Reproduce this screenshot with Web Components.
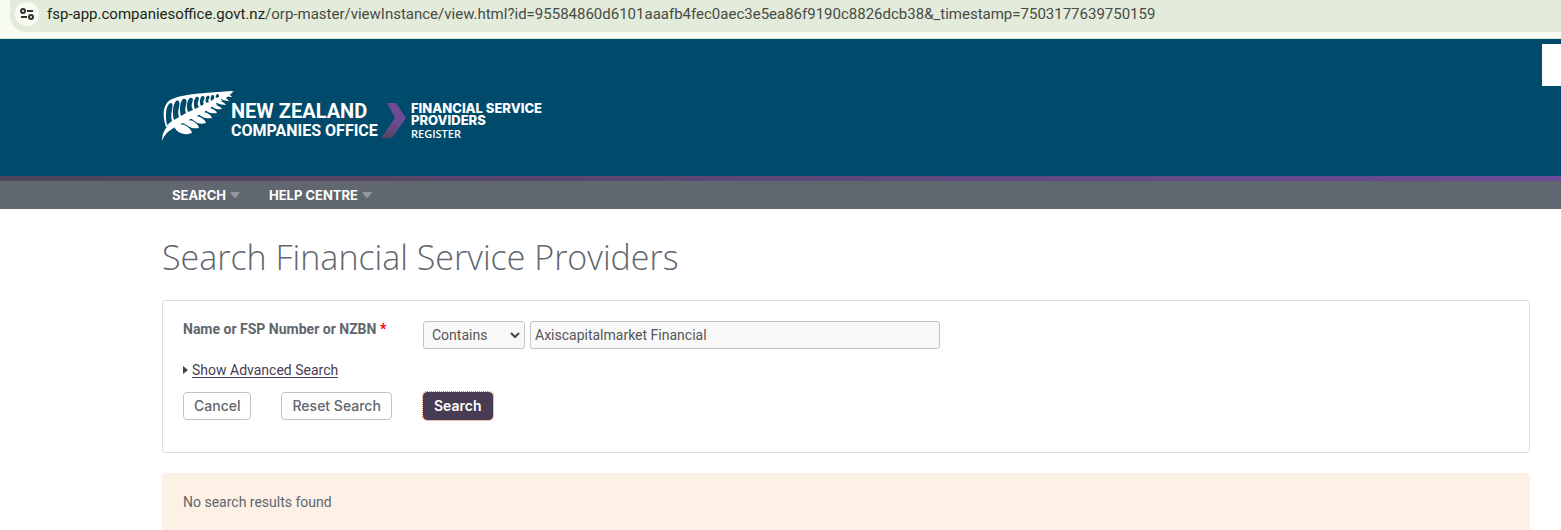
<!DOCTYPE html>
<html lang="en">
<head>
<meta charset="utf-8">
<title>Search Financial Service Providers</title>
<style>
    body {
        margin: 0;
        background: #fff;
        color: #5f666e;
        font: 14px/20px Roboto, sans-serif;
    }
</style>
</head>
<body>

<address-bar host="fsp-app.companiesoffice.govt.nz" path="/orp-master/viewInstance/view.html?id=95584860d6101aaafb4fec0aec3e5ea86f9190c8826dcb38&amp;_timestamp=7503177639750159"></address-bar>

<site-header>
    <span slot="register">Financial Service<br>Providers</span>
</site-header>

<nav-bar>
    <nav-item>Search</nav-item>
    <nav-item>Help Centre</nav-item>
</nav-bar>

<page-content>
    <span slot="title">Search Financial Service Providers</span>
    <search-form></search-form>
    <notice-box>No search results found</notice-box>
</page-content>

<script>
///////////////////////
//// Address bar /////
//////////////////////

class AddressBar extends HTMLElement {

    constructor() {
        super();

        this.attachShadow({ mode: 'open' });
        this.shadowRoot.innerHTML = `
            <style>
                :host {
                    display: block;
                    padding: 0 0 6px 10px;
                    background: #f9fcf2;
                    border-bottom: 1px solid #dce6d5;
                }

                .pill {
                    display: flex;
                    align-items: center;
                    gap: 8px;
                    height: 32px;
                    box-sizing: border-box;
                    padding: 0 5px 4px;
                    background: #e3ecda;
                    border-radius: 0 0 0 16px;
                    font: 15px/22px Roboto, sans-serif;
                    color: #474b45;
                    white-space: nowrap;
                }

                button {
                    display: flex;
                    flex: none;
                    padding: 0;
                    border: 0;
                    border-radius: 50%;
                    background: #f9fcf2;
                }

                .host { color: #1c1f1b; }
            </style>

            <div class="pill">
                <button type="button" aria-label="Site information">
                    <svg width="24" height="24" viewBox="0 0 24 24" fill="none" stroke="#30332f" stroke-width="2">
                        <circle cx="8" cy="9" r="2"/>
                        <path d="M12 9h6M6 15h6"/>
                        <circle cx="16" cy="15" r="2"/>
                    </svg>
                </button>
                <div><span class="host"></span><span class="path"></span></div>
            </div>
        `;

        this.shadowRoot.querySelector('.host').textContent = this.getAttribute('host');
        this.shadowRoot.querySelector('.path').textContent = this.getAttribute('path');
    }
}

window.customElements.define('address-bar', AddressBar);

///////////////////////
////// Fern logo //////
//////////////////////

class FernLogo extends HTMLElement {

    constructor() {
        super();

        this.attachShadow({ mode: 'open' });
        this.shadowRoot.innerHTML = `
            <style>
                :host { display: block; }
                svg { display: block; }
            </style>

            <svg width="72" height="52" viewBox="0 0 72 52" fill="#fff" aria-hidden="true">
                <!-- stem -->
                <path d="M0 51C0 43 3 38 9 33C26 25 48 14 62 4L72 1C64 9 50 18 39 24C27 30 16 35 10 39C4 43 2 46 0 51Z"/>
                <!-- upper fronds, cut by arched gaps -->
                <path fill-rule="evenodd" d="M4 37C0 25 1 15 8 10C20 4 40 3 71 1L60 8L9 34Z"/>
                <path fill="#004b6b" d="M5 35C3 26 4 17 7 14C11 11 11 16 10 20C9 24 9 28 10 31Z
                    M12 30C10 23 11 14 14 11C18 9 18 14 17 17C16 22 16 24 17 27Z
                    M19 26C17 20 18 12 21 9C25 8 25 12 24 15C23 19 23 21 24 23Z
                    M26 22C24 17 25 10 28 8C32 7 31 11 30 13C29 16 30 18 31 20Z
                    M33 19C31 15 32 9 34 7C38 6 37 10 36 12C35 14 36 15 37 17Z
                    M39 16C37 12 38 8 40 6C43 6 43 8 42 10C41 12 41 13 42 14Z
                    M44 13C43 10 44 7 45 6C48 5 48 8 47 9C46 10 46 11 47 12Z
                    M49 11C48 8 49 6 50 5C53 5 52 7 52 9Z
                    M54 8C53 7 54 5 55 4C57 4 57 5 57 7Z"/>
                <!-- lower fronds -->
                <path d="M12 35C19 32 29 37 30 43C23 46 13 43 12 35ZM20 31C27 28 36 32 37 38C30 39 22 37 20 31ZM28 27C35 24 43 28 44 33C37 35 30 32 28 27ZM36 23C42 20 49 24 50 28C44 29 38 27 36 23ZM43 19C48 17 54 20 55 23C50 24 45 23 43 19ZM49 15C53 14 58 16 60 19C55 20 51 19 49 15ZM54 11C58 10 62 12 64 15C60 15 56 14 54 11ZM59 7C62 7 66 9 67 11C63 11 60 10 59 7ZM63 4C66 4 69 5 70 7C67 7 65 7 63 4Z"/>
                <!-- gaps between the lower fronds -->
                <path d="M22 34L32 40M29 29L39 36M36 25L45 31M43 21L51 26M49 17L56 21M54 13L61 17M59 9L65 13" fill="none" stroke="#004b6b" stroke-width="1"/>
            </svg>
        `;
    }
}

window.customElements.define('fern-logo', FernLogo);

///////////////////////
///// Site header /////
//////////////////////

class SiteHeader extends HTMLElement {

    constructor() {
        super();

        this.attachShadow({ mode: 'open' });
        this.shadowRoot.innerHTML = `
            <style>
                :host {
                    display: block;
                    position: relative;
                    background: #004b6b;
                    color: #fff;
                }

                header {
                    display: flex;
                    align-items: flex-start;
                    padding: 51px 31px 34px 162px;
                }

                .brand {
                    display: flex;
                    color: inherit;
                    text-decoration: none;
                }

                .office {
                    padding-top: 11px;
                    width: 150px;
                    margin-left: -3px;
                    font: 700 20px/20px Roboto, sans-serif;
                    white-space: nowrap;
                }

                .office span { display: block; }
                .office .small { font-size: 16px; }

                .chevron { margin-top: 13px; }

                .register {
                    padding: 12px 0 0 5px;
                    font: 800 13px/12px Inter, sans-serif;
                    text-transform: uppercase;
                }

                .register small {
                    display: block;
                    font: 600 11px/15px "Open Sans", sans-serif;
                }

                .tab {
                    position: absolute;
                    top: 5px;
                    right: 0;
                    width: 19px;
                    height: 42px;
                    background: #fff;
                }
            </style>

            <header>
                <a class="brand" href="#">
                    <fern-logo></fern-logo>
                    <div class="office">
                        <span>NEW ZEALAND</span>
                        <span class="small">COMPANIES OFFICE</span>
                    </div>
                    <svg class="chevron" width="25" height="35" viewBox="0 0 25 35" aria-hidden="true">
                        <defs>
                            <linearGradient id="fade" x1="0" y1="0" x2="0" y2="1">
                                <stop offset=".5" stop-color="#6e4a97"/>
                                <stop offset="1" stop-color="#524760"/>
                            </linearGradient>
                        </defs>
                        <path fill="url(#fade)" d="M6 0H15L25 15L11 35H0L14 15Z"/>
                    </svg>
                    <div class="register"><slot name="register"></slot><small>Register</small></div>
                </a>
            </header>
            <div class="tab"></div>
        `;
    }
}

window.customElements.define('site-header', SiteHeader);

///////////////////////
///// Navigation //////
//////////////////////

class NavBar extends HTMLElement {

    constructor() {
        super();

        this.attachShadow({ mode: 'open' });
        this.shadowRoot.innerHTML = `
            <style>
                :host {
                    display: block;
                    background: #60676e;
                }

                .stripe {
                    height: 5px;
                    background: linear-gradient(90deg, #4f4458, #6b4c97);
                }

                nav {
                    display: flex;
                    gap: 29px;
                    padding: 0 31px 0 172px;
                }
            </style>

            <div class="stripe"></div>
            <nav><slot></slot></nav>
        `;
    }
}

window.customElements.define('nav-bar', NavBar);

class NavItem extends HTMLElement {

    constructor() {
        super();

        this.attachShadow({ mode: 'open' });
        this.shadowRoot.innerHTML = `
            <style>
                :host { display: block; }

                a {
                    display: flex;
                    align-items: center;
                    gap: 4px;
                    color: #fff;
                    font: 700 13px/28px Inter, sans-serif;
                    text-decoration: none;
                    text-transform: uppercase;
                }
            </style>

            <a href="#">
                <slot></slot>
                <svg width="10" height="6" viewBox="0 0 10 6" fill="#9297a0" aria-hidden="true">
                    <path d="M1 0H9Q10 0 9.500 1L6 5.500Q5 6 4 5.500L.5 1Q0 0 1 0Z"/>
                </svg>
            </a>
        `;
    }
}

window.customElements.define('nav-item', NavItem);

///////////////////////
//// Page content ////
//////////////////////

class PageContent extends HTMLElement {

    constructor() {
        super();

        this.attachShadow({ mode: 'open' });
        this.shadowRoot.innerHTML = `
            <style>
                :host { display: block; }

                main {
                    display: flex;
                    flex-direction: column;
                    gap: 20px;
                    padding: 28px 31px 0 162px;
                }

                h1 {
                    margin: 0 0 3px;
                    font: 300 34px/40px "Open Sans", sans-serif;
                }
            </style>

            <main>
                <h1><slot name="title"></slot></h1>
                <slot></slot>
            </main>
        `;
    }
}

window.customElements.define('page-content', PageContent);

///////////////////////
///// Search form /////
//////////////////////

class SearchForm extends HTMLElement {

    constructor() {
        super();

        this.attachShadow({ mode: 'open' });
        this.shadowRoot.innerHTML = `
            <style>
                :host {
                    display: block;
                    padding: 20px;
                    border: 1px solid #ddd;
                    border-radius: 3px;
                }

                form { padding-bottom: 12px; }

                .row {
                    display: grid;
                    grid-template-columns: 240px 1fr;
                }

                label {
                    font-weight: 700;
                    line-height: 16px;
                }

                label span { color: #f00; }

                .fields {
                    display: flex;
                    gap: 5px;
                }

                select, input {
                    box-sizing: border-box;
                    height: 28px;
                    margin: 0;
                    border: 1px solid #c4c4c4;
                    border-radius: 3px;
                    background: #f8f8f8;
                    color: #555;
                    font: inherit;
                }

                .select {
                    display: grid;
                    align-items: center;
                    width: 102px;
                }

                .select > * { grid-area: 1 / 1; }

                select {
                    width: 100%;
                    padding: 0 8px;
                    appearance: none;
                }

                .select svg {
                    justify-self: end;
                    margin-right: 5px;
                    pointer-events: none;
                }

                input {
                    width: 410px;
                    padding: 0 4px;
                }

                .advanced {
                    display: flex;
                    align-items: center;
                    gap: 4px;
                    margin: 11px 0 12px;
                }

                a {
                    color: #473c53;
                    text-underline-offset: 2px;
                }

                .cancel {
                    display: flex;
                    gap: 30px;
                }

                button {
                    height: 28px;
                    padding: 0 10px;
                    border: 1px solid #c4c4c4;
                    border-radius: 4px;
                    background: #fff;
                    color: #5f666e;
                    font: 500 14px/20px Inter, sans-serif;
                }

                .primary {
                    justify-self: start;
                    border-color: #473c53;
                    outline: 1px dotted #f47a30;
                    background: #473c53;
                    color: #fff;
                    font-weight: 600;
                }
            </style>

            <form onsubmit="return false">
                <div class="row">
                    <label for="query">Name or FSP Number or NZBN <span>*</span></label>
                    <div class="fields">
                        <div class="select">
                            <select aria-label="Match type">
                                <option>Contains</option>
                                <option>Starts with</option>
                            </select>
                            <svg width="10" height="8" viewBox="0 0 10 8" fill="none" stroke="#444" stroke-width="2" aria-hidden="true">
                                <path d="M1 2L5 6L9 2"/>
                            </svg>
                        </div>
                        <input id="query" type="text" value="Axiscapitalmarket Financial">
                    </div>
                </div>

                <div class="advanced">
                    <svg width="5" height="8" viewBox="0 0 5 8" fill="#473c53" aria-hidden="true">
                        <path d="M0 0L5 4L0 8Z"/>
                    </svg>
                    <a href="#">Show Advanced Search</a>
                </div>

                <div class="row">
                    <div class="cancel">
                        <button type="button">Cancel</button>
                        <button type="reset">Reset Search</button>
                    </div>
                    <button class="primary" type="submit">Search</button>
                </div>
            </form>
        `;
    }
}

window.customElements.define('search-form', SearchForm);

///////////////////////
/////// Notice ////////
//////////////////////

class NoticeBox extends HTMLElement {

    constructor() {
        super();

        this.attachShadow({ mode: 'open' });
        this.shadowRoot.innerHTML = `
            <style>
                :host {
                    display: block;
                    padding: 19px 21px;
                    border-radius: 4px 4px 0 0;
                    background: #fdf0e5;
                }
            </style>

            <slot></slot>
        `;
    }
}

window.customElements.define('notice-box', NoticeBox);
</script>
</body>
</html>
